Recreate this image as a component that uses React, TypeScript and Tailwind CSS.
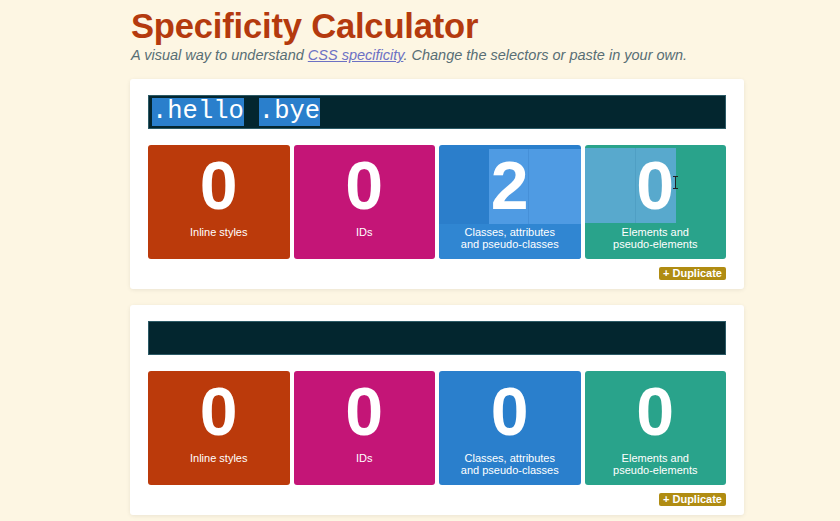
import React from 'react';

type Score = { value: number; label: string[]; color: string };

const scores = (a: number, b: number, c: number, d: number): Score[] => [
    { value: a, label: ['Inline styles'], color: 'bg-[#bb3a0b]' },
    { value: b, label: ['IDs'], color: 'bg-[#c41577]' },
    { value: c, label: ['Classes, attributes', 'and pseudo-classes'], color: 'bg-[#2a7fcc]' },
    { value: d, label: ['Elements and', 'pseudo-elements'], color: 'bg-[#29a38b]' },
];

// transition overlays caught mid-animation in the first card
const ClassOverlay = () => (
    <>
        <div className="absolute left-0 right-0 top-[4px] h-[75px] bg-[#2b7ecb]" />
        <div className="absolute left-[50px] right-0 top-[4px] h-[75px] bg-[#4f9be3]" />
        <div className="absolute left-[89px] top-[4px] h-[75px] w-px bg-[#4690d8]" />
        <div className="absolute left-0 right-0 top-[79px] bottom-0 bg-[#3086d2]" />
    </>
);

const ElementOverlay = () => (
    <>
        <div className="absolute left-0 w-[91px] top-[3px] h-[75px] bg-[#58a9cd]" />
        <div className="absolute left-[50px] top-[3px] h-[75px] w-px bg-[#4f9fc4]" />
    </>
);

const Cursor = () => (
    <svg className="absolute left-[87px] top-[31px]" width="7" height="13" viewBox="0 0 7 13">
        <path d="M1 0.5h5M3.5 0.5v12M1 12.5h5" stroke="#222" strokeWidth="1" fill="none" />
    </svg>
);

const ScoreBox = ({ score, overlay }: { score: Score; overlay?: React.ReactNode }) => (
    <div className={`relative h-[114px] rounded-[3px] overflow-hidden text-white ${score.color}`}>
        {overlay}
        <div className="relative flex flex-col items-center pt-[6px]">
            <div className="text-[68px] leading-[68px] font-bold">{score.value}</div>
            <div className="mt-[8px] text-[11px] leading-[11.5px] text-center">
                {score.label.map((line) => (
                    <div key={line}>{line}</div>
                ))}
            </div>
        </div>
    </div>
);

const Calculator = ({ selectors, values, highlighted }: { selectors: string[]; values: Score[]; highlighted?: boolean }) => (
    <div className="bg-white rounded-[3px] shadow-[0_1px_4px_rgba(0,0,0,0.08)] px-[18px] pt-[16px] pb-[9px]">
        <div className="h-[34px] bg-[#03262f] border border-[#2c5a66] flex items-center px-[3px] gap-[15px] font-['Liberation_Mono',monospace] text-[25.5px] leading-[28px] text-white">
            {selectors.map((sel) => (
                <span key={sel} className={highlighted ? 'bg-[#2a7fcc]' : ''}>
                    {sel}
                </span>
            ))}
        </div>
        <div className="grid grid-cols-4 gap-[4px] mt-[16px]">
            {values.map((score, i) => (
                <ScoreBox
                    key={score.label[0]}
                    score={score}
                    overlay={
                        highlighted && i === 2 ? (
                            <ClassOverlay />
                        ) : highlighted && i === 3 ? (
                            <>
                                <ElementOverlay />
                                <Cursor />
                            </>
                        ) : undefined
                    }
                />
            ))}
        </div>
        <div className="flex justify-end mt-[8px]">
            <button className="bg-[#b08c12] text-white text-[11px] leading-[13px] font-bold px-[4px] rounded-[2px]">
                + Duplicate
            </button>
        </div>
    </div>
);

const App = () => (
    <div className="min-h-[521px] bg-[#fdf6e3] font-['Liberation_Sans',Arial,sans-serif] overflow-hidden">
        <div className="ml-[130px] w-[614px] pt-[6px]">
            <h1 className="text-[34.6px] leading-[40px] font-bold text-[#b43a0e] pl-[1px] tracking-[-0.2px]">
                Specificity Calculator
            </h1>
            <p className="text-[14.5px] leading-[18px] italic text-[#586e75] pl-[1px]">
                A visual way to understand{' '}
                <a className="text-[#6c71c4] underline" href="#">CSS specificity</a>. Change the selectors or paste in your own.
            </p>
            <div className="flex flex-col gap-[16px] mt-[15px]">
                <Calculator selectors={['.hello', '.bye']} values={scores(0, 0, 2, 0)} highlighted />
                <Calculator selectors={[]} values={scores(0, 0, 0, 0)} />
            </div>
        </div>
    </div>
);

export default App;
